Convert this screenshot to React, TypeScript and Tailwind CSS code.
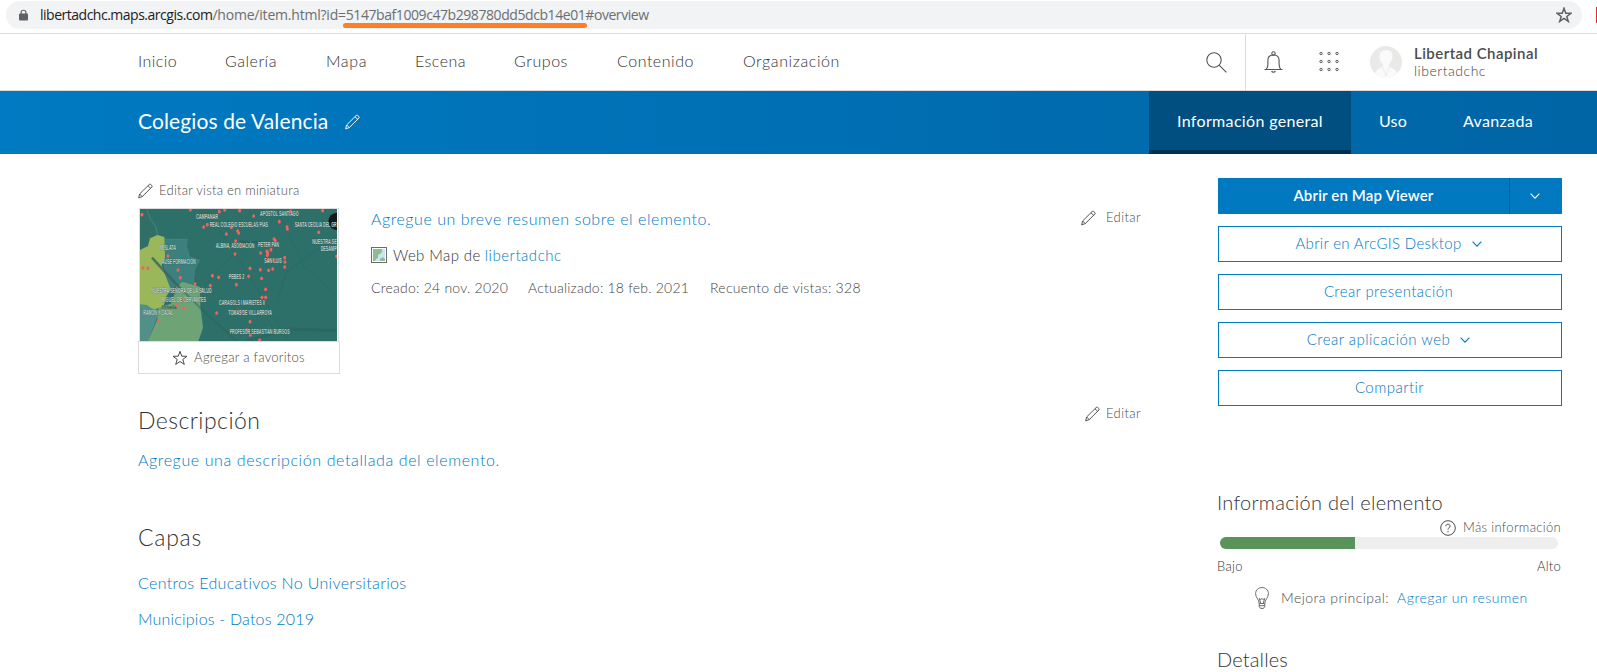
import type { ReactNode } from "react";

const navItems = [
  { label: "Inicio", cls: "w-[87px] tracking-[0.43px]" },
  { label: "Galería", cls: "w-[101px] tracking-[0.53px]" },
  { label: "Mapa", cls: "w-[89px] tracking-[0.61px]" },
  { label: "Escena", cls: "w-[99px] tracking-[0.47px]" },
  { label: "Grupos", cls: "w-[103px] tracking-[0.56px]" },
  { label: "Contenido", cls: "w-[126px] tracking-[0.53px]" },
  { label: "Organización", cls: "w-[110px] tracking-[0.6px]" },
];

const mapLabels: [string, number, number, number][] = [
  ["CAMPANAR", 198, 131, 66],
  ["APÓSTOL SANTIAGO", 390, 122, 116],
  ["REAL COLEGIO ESCUELAS PÍAS", 239, 156, 175],
  ["SANTA CECILIA DEL GR", 494, 155, 126],
  ["NUESTRA SE", 547, 206, 73],
  ["DESAMP", 572, 227, 48],
  ["MISLATA", 90, 225, 48],
  ["ALBINA, ASOCIACIÓN", 257, 218, 116],
  ["PETER PAN", 384, 215, 63],
  ["AUSE FORMACIÓN", 95, 267, 102],
  ["SAN LUIS", 403, 265, 52],
  ["PEBES 2", 296, 312, 47],
  ["NUESTRA SEÑORA DE LA SALUD", 64, 355, 181],
  ["MIGUEL DE CERVANTES", 94, 382, 134],
  ["CARAGOLS I MARIETES II", 267, 391, 137],
  ["RAMÓN Y CAJAL", 40, 419, 90],
  ["TOMÁS DE VILLARROYA", 295, 421, 131],
  ["PROFESOR SEBASTIÁN BURGOS", 299, 478, 180],
];

const mapPoints: [number, number][] = [
  [36, 119], [181, 104], [268, 110], [284, 105], [329, 107], [371, 123], [482, 108], [578, 107],
  [448, 140], [471, 156], [472, 162], [566, 172], [221, 156], [232, 149], [289, 177], [323, 168],
  [326, 174], [304, 157], [317, 198], [432, 192], [436, 197], [315, 237], [392, 234], [411, 229],
  [413, 235], [423, 224], [412, 241], [464, 248], [465, 261], [464, 276], [416, 257], [428, 282],
  [416, 286], [391, 284], [360, 280], [356, 304], [395, 310], [247, 302], [266, 307], [241, 332],
  [319, 329], [407, 343], [396, 367], [407, 367], [114, 243], [144, 285], [151, 308], [195, 327],
  [217, 343], [39, 279], [54, 280], [140, 391], [161, 399], [155, 375], [86, 438], [260, 414],
  [334, 410], [360, 440], [350, 465], [361, 480], [389, 495], [620, 244], [333, 210], [431, 255],
];

function Pencil({ className }: { className?: string }) {
  return (
    <svg viewBox="0 0 16 16" className={className} fill="none" stroke="currentColor" strokeWidth="1">
      <path
        d="M.7 15.3l1-4.100L11.900 1.100c.5-.5 1.100-.5 1.600-.1l1.300 1.200c.5.5.5 1 .1 1.500L4.500 14z"
        strokeLinejoin="round"
      />
      <path d="M10.700 2.500l2.900 2.700M1.700 11.200l2.800 2.800" />
    </svg>
  );
}

function Chevron() {
  return (
    <svg viewBox="0 0 10 6" className="h-[6px] w-[10px]" fill="none" stroke="currentColor" strokeWidth="1.1">
      <path d="M.6.7L5 5.100 9.400.7" />
    </svg>
  );
}

function Star({ className, width }: { className: string; width: number }) {
  return (
    <svg viewBox="0 0 16 16" className={className} fill="none" stroke="currentColor" strokeWidth={width}>
      <path d="M8 1.300l1.750 4.900 5.200.1-4.150 3.150 1.500 5L8 11.500l-4.300 2.950 1.500-5L1.050 6.300l5.200-.1z" />
    </svg>
  );
}

function OutlineButton({ children }: { children: ReactNode }) {
  return (
    <button className="flex h-9 w-full items-center justify-center border border-[#0079c1] pb-px pr-[3px] text-[15px] font-light text-[#0079c1]">
      {children}
    </button>
  );
}

function MapThumbnail() {
  return (
    <svg viewBox="30 102 591 396" preserveAspectRatio="none" className="block h-[132px] w-[197px]">
      <rect x="30" y="102" width="591" height="396" fill="#2d7069" />
      <path d="M30 102h20l10 30 18 25 4 25-22 6-8 25-22 14z" fill="#316f66" />
      <path d="M50 102l12 32 16 22 4 24" fill="none" stroke="#579088" strokeWidth="2" />
      <path
        d="M104 192l68 1-3 21 10 32 30 10-14 24-6 46-10 10-37-10-12 10-28 20z"
        fill="#3b807c"
        stroke="#528f87"
        strokeWidth="1.5"
      />
      <path d="M30 376l38 6 20 30-34 86H30z" fill="#529087" />
      <path
        d="M30 225l24-12 6-23 22-10 21 6 2 62-10 22 12 34 16 40-14 20-8 30-30 10-20-14-21-2z"
        fill="#9ab75a"
      />
      <path
        d="M142 338l14-16 52 14 2 60 8 62-14 40H55l28-64 4-36 36-10z"
        fill="#6ea376"
        stroke="#88b08a"
        strokeWidth="1.5"
      />
      <path d="M66 248l84 92" stroke="#3f625c" strokeWidth="8" opacity=".8" />
      <path d="M150 338l70 70 100 90" stroke="#2a625c" strokeWidth="6" fill="none" opacity=".5" />
      <path
        d="M225 102l90 130 160 266M315 232l-90 100M440 102l80 170 101 90M621 180l-150 110-30 90"
        stroke="#27665f"
        strokeWidth="2.5"
        fill="none"
        opacity=".5"
      />
      <path d="M350 498l130-36 141 5" stroke="#2a605a" strokeWidth="9" fill="none" opacity=".45" />
      <path d="M621 113a24 24 0 0 0 0 52z" fill="#15191b" />
      <g fontFamily="Liberation Sans, sans-serif" fontSize="17" fill="#26433f">
        <text x="329" y="207" textLength="64" lengthAdjust="spacingAndGlyphs" opacity=".7">Valencia</text>
        <text x="94" y="403" textLength="46" fontSize="14" lengthAdjust="spacingAndGlyphs">Xirivella</text>
      </g>
      <g fill="#f4625c">
        {mapPoints.map(([x, y]) => (
          <ellipse key={`${x}-${y}`} cx={x} cy={y} rx="4.400" ry="5.600" />
        ))}
      </g>
      <g
        fontFamily="Liberation Sans, sans-serif"
        fontSize="19"
        fontWeight="700"
        fill="#bccfca"
        stroke="#35504c"
        strokeWidth="2"
        paintOrder="stroke"
        strokeOpacity=".6"
      >
        {mapLabels.map(([label, x, y, w]) => (
          <text key={label} x={x} y={y} textLength={w} lengthAdjust="spacingAndGlyphs">
            {label}
          </text>
        ))}
      </g>
    </svg>
  );
}

function BrowserBar() {
  return (
    <div className="flex h-[34px] justify-between border-b border-[#dcdcdc] pt-px">
      <div className="ml-[6px] flex h-7 w-[1576px] items-center rounded-full bg-[#f1f3f4] pl-[13px] pr-[10px]">
        <svg viewBox="0 0 10 12" className="mr-[12px] h-[12px] w-[9px] text-[#5f6368]">
          <rect y="4.300" width="10" height="7.700" rx="1" fill="currentColor" />
          <path d="M2.400 5V3a2.600 2.300 0 0 1 5.200 0v2" fill="none" stroke="currentColor" strokeWidth="1.300" />
        </svg>
        <div className="flex font-['Open_Sans',sans-serif] text-[14px] leading-7 text-[#6b6e72]">
          <span className="tracking-[-0.49px] text-[#202124]">libertadchc.maps.arcgis.com</span>
          <span className="tracking-[-0.21px]">/home/item.html?id=</span>
          <span className="relative tracking-[-0.43px]">
            5147baf1009c47b298780dd5dcb14e01
            <span className="absolute -left-[3px] bottom-px h-[5px] w-[244px] rounded-sm bg-[#ff7f27]" />
          </span>
          <span className="tracking-[-0.44px]">#overview</span>
        </div>
        <Star className="ml-auto h-[16px] w-[16px] text-[#5f6368]" width={1.5} />
      </div>
      <div className="mt-[6px] h-[16px] w-px bg-[#d93030]" />
    </div>
  );
}

function TopNav() {
  return (
    <nav className="flex h-[57px] border-b border-[#dcdcdc] pl-[138px] text-[16px] text-[#333]">
      <div className="-ml-px flex items-center pb-[3px] pl-px font-light">
        {navItems.map((n) => (
          <a key={n.label} className={n.cls}>
            {n.label}
          </a>
        ))}
      </div>
      <div className="ml-auto flex items-center border-r border-[#dcdcdc] pr-[18px]">
        <svg viewBox="0 0 21 21" className="h-[21px] w-[21px]" fill="none" stroke="#555" strokeWidth="1.100">
          <circle cx="8" cy="8" r="7.200" />
          <path d="M13.100 13.100l7.300 7.300" />
        </svg>
      </div>
      <div className="flex w-[351px] items-center pl-[18px]">
        <svg viewBox="0 0 19 22" className="h-[22px] w-[19px]" fill="none" stroke="#555" strokeWidth="1.100">
          <circle cx="9.500" cy="2.400" r="1.700" />
          <path d="M.5 18.500h18M2.400 18.200c1.300-1.600 1.500-3 1.500-5.200V9.600c0-3.300 2.200-5.600 5.600-5.600s5.600 2.300 5.600 5.600V13c0 2.200.2 3.600 1.500 5.200" />
          <path d="M7.600 20c.3.900 1 1.200 1.900 1.200s1.600-.3 1.900-1.200" />
        </svg>
        <svg viewBox="0 0 20 20" className="ml-[36px] h-[20px] w-[20px]" fill="none" stroke="#555" strokeWidth="1">
          {[1.5, 9.5, 17.5].map((y) =>
            [2, 10, 18].map((x) => <circle key={`${x}-${y}`} cx={x} cy={y} r="1.200" />)
          )}
        </svg>
        <svg viewBox="0 0 32 32" className="ml-[31px] h-8 w-8 rounded-full">
          <rect width="32" height="32" fill="#e9e9e8" />
          <path d="M4 32c.5-6 2-8.500 8.500-11l.5-3c-3-2-4-6-3.500-9C10 5.500 13 4 16 4.200c4-.2 6.500 1.800 6.500 5.300 0 3.500-1 6.500-3.500 8.500l.5 3c6.500 2.500 8 5 8.500 11z" fill="#fafafa" />
          <path d="M12.500 20.500L16 30l3.500-9.500" fill="none" stroke="#e9e9e9" strokeWidth=".8" />
        </svg>
        <div className="ml-[12px] flex flex-col pb-px">
          <span className="text-[15px] font-semibold leading-[17px] tracking-[0.45px] text-[#4c4c4c]">
            Libertad Chapinal
          </span>
          <span className="text-[14px] font-light leading-[17px] tracking-[0.51px] text-[#444]">libertadchc</span>
        </div>
      </div>
    </nav>
  );
}

function TitleBar() {
  return (
    <header className="flex h-[63px] bg-linear-to-r from-[#007ac2] to-[#0065a5] pl-[138px] text-white">
      <div className="flex items-center pb-[3px]">
        <h1 className="text-[21px] tracking-[0.12px]">Colegios de Valencia</h1>
        <Pencil className="ml-[17px] mt-[2px] h-[16px] w-[15px]" />
      </div>
      <div className="ml-auto flex w-[448px] text-[16px]">
        <a className="flex w-[202px] items-center justify-center border-b-4 border-[#00304f] bg-[#004f80] tracking-[0.34px]">
          Información general
        </a>
        <a className="flex items-center pb-1 pl-[28px] tracking-[0.21px]">Uso</a>
        <a className="flex items-center pb-1 pl-[56px] tracking-[0.34px]">Avanzada</a>
      </div>
    </header>
  );
}

function EditLink({ gap }: { gap: string }) {
  return (
    <a className="flex h-6 items-center text-[13px] font-light tracking-[0.4px] text-[#4a4a4a]">
      <Pencil className={gap} />
      Editar
    </a>
  );
}

function ItemContent() {
  return (
    <section className="w-[1003px] pt-[25px]">
      <a className="flex h-6 items-center text-[13px] font-light tracking-[0.25px] text-[#4a4a4a]">
        <Pencil className="mr-[6px] h-4 w-[15px]" />
        Editar vista en miniatura
      </a>
      <div className="mt-[2px] flex">
        <div className="w-[202px] pt-[3px]">
          <div className="mx-px border border-b-0 border-[#dcdcdc]">
            <MapThumbnail />
          </div>
          <a className="flex h-[33px] items-center justify-center border border-[#dcdcdc] pr-px text-[13px] font-light tracking-[0.27px] text-[#4a4a4a]">
            <Star className="mr-[6px] h-[16px] w-[16px]" width={1} />
            Agregar a favoritos
          </a>
        </div>
        <div className="ml-[31px] pt-[2px] font-light leading-6">
          <p className="text-[16px] tracking-[0.54px] text-[#0079c1]">Agregue un breve resumen sobre el elemento.</p>
          <p className="mt-[12px] flex items-center text-[15px] text-[#333]">
            <svg viewBox="0 0 16 16" className="mr-[6px] h-4 w-4">
              <rect x=".5" y=".5" width="15" height="15" fill="#fff" stroke="#6b6b6b" />
              <rect x="2" y="2" width="12" height="12" fill="#c9e3f5" />
              <path d="M2 2h9v3L9 7 7 8v3l-2 1-1 2H2z" fill="#8fbc8f" />
              <path d="M9 14v-2l3-2 2 2v2z" fill="#8fbc8f" />
            </svg>
            <span className="tracking-[0.4px]">Web Map de</span>
            <a className="ml-[4px] tracking-[0.53px] text-[#0079c1]">libertadchc</a>
          </p>
          <p className="mt-[9px] flex text-[14px] text-[#444]">
            <span className="w-[157px] tracking-[0.24px]">Creado: 24 nov. 2020</span>
            <span className="w-[182px] tracking-[0.21px]">Actualizado: 18 feb. 2021</span>
            <span className="tracking-[0.27px]">Recuento de vistas: 328</span>
          </p>
        </div>
        <div className="ml-auto pt-px">
          <EditLink gap="mr-[10px] h-4 w-[15px]" />
        </div>
      </div>
      <div className="mt-[31px] flex items-start justify-between">
        <h2 className="text-[23px] font-light leading-[30px] tracking-[0.46px] text-[#333]">Descripción</h2>
        <div className="-mt-[3px]">
          <EditLink gap="mr-[6px] h-4 w-[15px]" />
        </div>
      </div>
      <p className="mt-[13px] text-[16px] font-light leading-6 tracking-[0.6px] text-[#0079c1]">
        Agregue una descripción detallada del elemento.
      </p>
      <h2 className="mt-[50px] text-[23px] font-light leading-[30px] tracking-[0.75px] text-[#333]">Capas</h2>
      <ul className="mt-[19px] flex flex-col gap-3 text-[16px] font-light leading-6 text-[#0079c1]">
        <li className="tracking-[0.34px]">Centros Educativos No Universitarios</li>
        <li className="tracking-[0.2px]">Municipios - Datos 2019</li>
      </ul>
    </section>
  );
}

function Sidebar() {
  return (
    <aside className="ml-[77px] w-[344px] pt-6">
      <div className="flex flex-col gap-3">
        <div className="flex h-9 bg-[#0079c1] text-white">
          <button className="w-[292px] border-r border-[#005e95] pb-px text-[15px] font-semibold tracking-[0.15px]">
            Abrir en Map Viewer
          </button>
          <button className="flex flex-1 items-center justify-center pr-[3px]">
            <Chevron />
          </button>
        </div>
        <OutlineButton>
          <span className="mr-[10px] tracking-[0.34px]">Abrir en ArcGIS Desktop</span>
          <Chevron />
        </OutlineButton>
        <OutlineButton>
          <span className="tracking-[0.41px]">Crear presentación</span>
        </OutlineButton>
        <OutlineButton>
          <span className="mr-[10px] tracking-[0.48px]">Crear aplicación web</span>
          <Chevron />
        </OutlineButton>
        <OutlineButton>
          <span className="pl-[2px] tracking-[0.46px]">Compartir</span>
        </OutlineButton>
      </div>
      <div className="-ml-px mr-px">
        <h3 className="mt-[84px] text-[20px] font-light leading-6 tracking-[0.26px] text-[#333]">
          Información del elemento
        </h3>
        <a className="mt-[5px] flex h-[18px] items-center justify-end text-[13px] font-light tracking-[0.33px] text-[#4a4a4a]">
          <svg viewBox="0 0 16 16" className="mr-[7px] h-4 w-4" fill="none" stroke="currentColor">
            <circle cx="8" cy="8" r="7.300" />
            <path d="M5.900 6.300c0-1.300.9-2.100 2.100-2.100s2.100.8 2.100 1.900c0 1.500-2.100 1.700-2.100 3.500M8 11v1.300" />
          </svg>
          Más información
        </a>
        <div className="mx-[3px] h-3 overflow-hidden rounded-full bg-[#eee]">
          <div className="h-full w-[135px] bg-[#5a9359]" />
        </div>
        <div className="mt-[9px] flex h-[18px] items-center justify-between text-[13px] font-light text-[#333]">
          <span className="tracking-[0.36px]">Bajo</span>
          <span className="tracking-[0.24px]">Alto</span>
        </div>
        <div className="mt-[11px] flex h-[22px] items-center pl-[38px] text-[14px] font-light">
          <svg
            viewBox="0 0 14 22"
            className="mr-[12px] h-[22px] w-[14px] shrink-0"
            fill="none"
            stroke="#6a6a6a"
            strokeWidth="1"
          >
            <path d="M4.200 16.500c0-4-3.600-5.700-3.600-9.800C.6 3 3.200.6 7 .6s6.400 2.400 6.400 6.100c0 4.100-3.600 5.800-3.600 9.800z" />
            <path d="M5.700 16L4.300 11.500l1.600 1 1.100-1 1.100 1 1.600-1L8.300 16M4 18.700h6M4.200 16.500v3L5.500 21.400h3l1.300-1.900v-3" />
          </svg>
          <span className="pb-[2px] tracking-[0.46px] text-[#4a4a4a]">Mejora principal:</span>
          <a className="ml-[8px] pb-[2px] tracking-[0.51px] text-[#0079c1]">Agregar un resumen</a>
        </div>
        <h3 className="mt-[38px] text-[20px] font-light leading-6 tracking-[0.16px] text-[#333]">Detalles</h3>
      </div>
    </aside>
  );
}

export default function App() {
  return (
    <div className="h-[672px] w-[1597px] overflow-hidden bg-white font-[Lato,sans-serif]">
      <BrowserBar />
      <TopNav />
      <TitleBar />
      <main className="flex pl-[138px]">
        <ItemContent />
        <Sidebar />
      </main>
    </div>
  );
}
